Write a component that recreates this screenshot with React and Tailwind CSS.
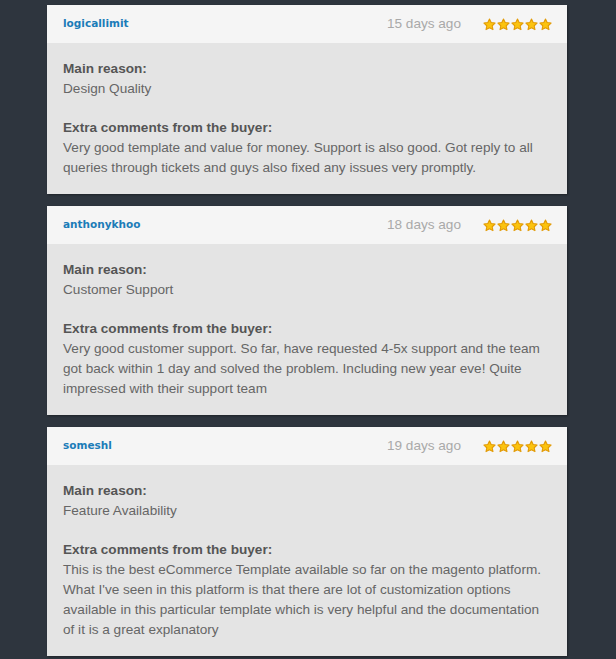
const reviews = [
    {
        user: 'logicallimit',
        date: '15 days ago',
        reason: 'Design Quality',
        comment:
            'Very good template and value for money. Support is also good. Got reply to all queries through tickets and guys also fixed any issues very promptly.',
    },
    {
        user: 'anthonykhoo',
        date: '18 days ago',
        reason: 'Customer Support',
        comment:
            'Very good customer support. So far, have requested 4-5x support and the team got back within 1 day and solved the problem. Including new year eve! Quite impressed with their support team',
    },
    {
        user: 'someshl',
        date: '19 days ago',
        reason: 'Feature Availability',
        comment:
            "This is the best eCommerce Template available so far on the magento platform. What I've seen in this platform is that there are lot of customization options available in this particular template which is very helpful and the documentation of it is a great explanatory",
    },
];

function Star() {
    return (
        <svg width="13" height="13" viewBox="0 0 24 24">
            <path
                d="M12 1.8l3.1 6.6 7.2.9-5.3 5 1.4 7.1L12 17.9l-6.4 3.5 1.4-7.1-5.3-5 7.2-.9z"
                fill="#fbc30f"
                stroke="#e29a05"
                strokeWidth="2"
                strokeLinejoin="round"
            />
        </svg>
    );
}

function ReviewCard({ review }) {
    return (
        <div className="w-[520px] shadow-[1px_1px_2px_rgba(0,0,0,0.35)]">
            {/* header */}
            <div className="h-[38px] bg-[#f5f5f5] flex items-center pl-4 pr-[15px]">
                <span className="font-['DejaVu_Sans',sans-serif] font-bold text-[10.5px] text-[#1b7cb8]">
                    {review.user}
                </span>
                <span className="ml-auto text-[13.6px] text-[#a9a9a9]">{review.date}</span>
                <div className="ml-[22px] flex gap-[1px]">
                    <Star />
                    <Star />
                    <Star />
                    <Star />
                    <Star />
                </div>
            </div>
            {/* body */}
            <div className="bg-[#e4e4e4] pl-4 pr-[15px] pt-4 pb-4 text-[13.6px] leading-[20px] text-[#666]">
                <p className="font-bold text-[#555]">Main reason:</p>
                <p>{review.reason}</p>
                <p className="mt-[19px] font-bold text-[#555]">Extra comments from the buyer:</p>
                <p>{review.comment}</p>
            </div>
        </div>
    );
}

export default function App() {
    return (
        <div className="min-h-screen bg-[#2e353e] pt-[5px] pb-4 font-['Liberation_Sans',Arial,sans-serif]">
            <div className="ml-[47px] flex flex-col gap-3">
                {reviews.map((r) => (
                    <ReviewCard key={r.user} review={r} />
                ))}
            </div>
        </div>
    );
}
